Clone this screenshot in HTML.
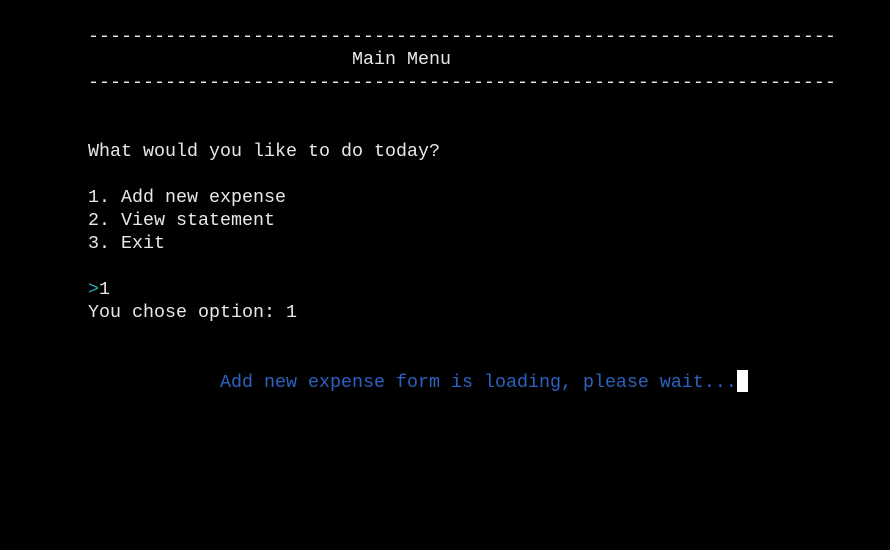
<!DOCTYPE html>
<html><head><meta charset="utf-8"><style>
html,body{margin:0;padding:0;background:#000;width:890px;height:550px;overflow:hidden}
pre{position:absolute;left:88px;top:25px;margin:0;font-family:"Liberation Mono",monospace;font-size:18.33px;line-height:23px;color:#e8e8e8;white-space:pre}
.c{color:#2aa9b8}.b{color:#2c62c0}
.cur{display:inline-block;width:11px;height:22px;background:#fff;vertical-align:-5px}
</style></head><body>
<pre>--------------------------------------------------------------------
                        Main Menu
--------------------------------------------------------------------


What would you like to do today?

1. Add new expense
2. View statement
3. Exit

<span class="c">&gt;</span>1
You chose option: 1


<span class="b">            Add new expense form is loading, please wait...</span><span class="cur"></span></pre>
</body></html>
